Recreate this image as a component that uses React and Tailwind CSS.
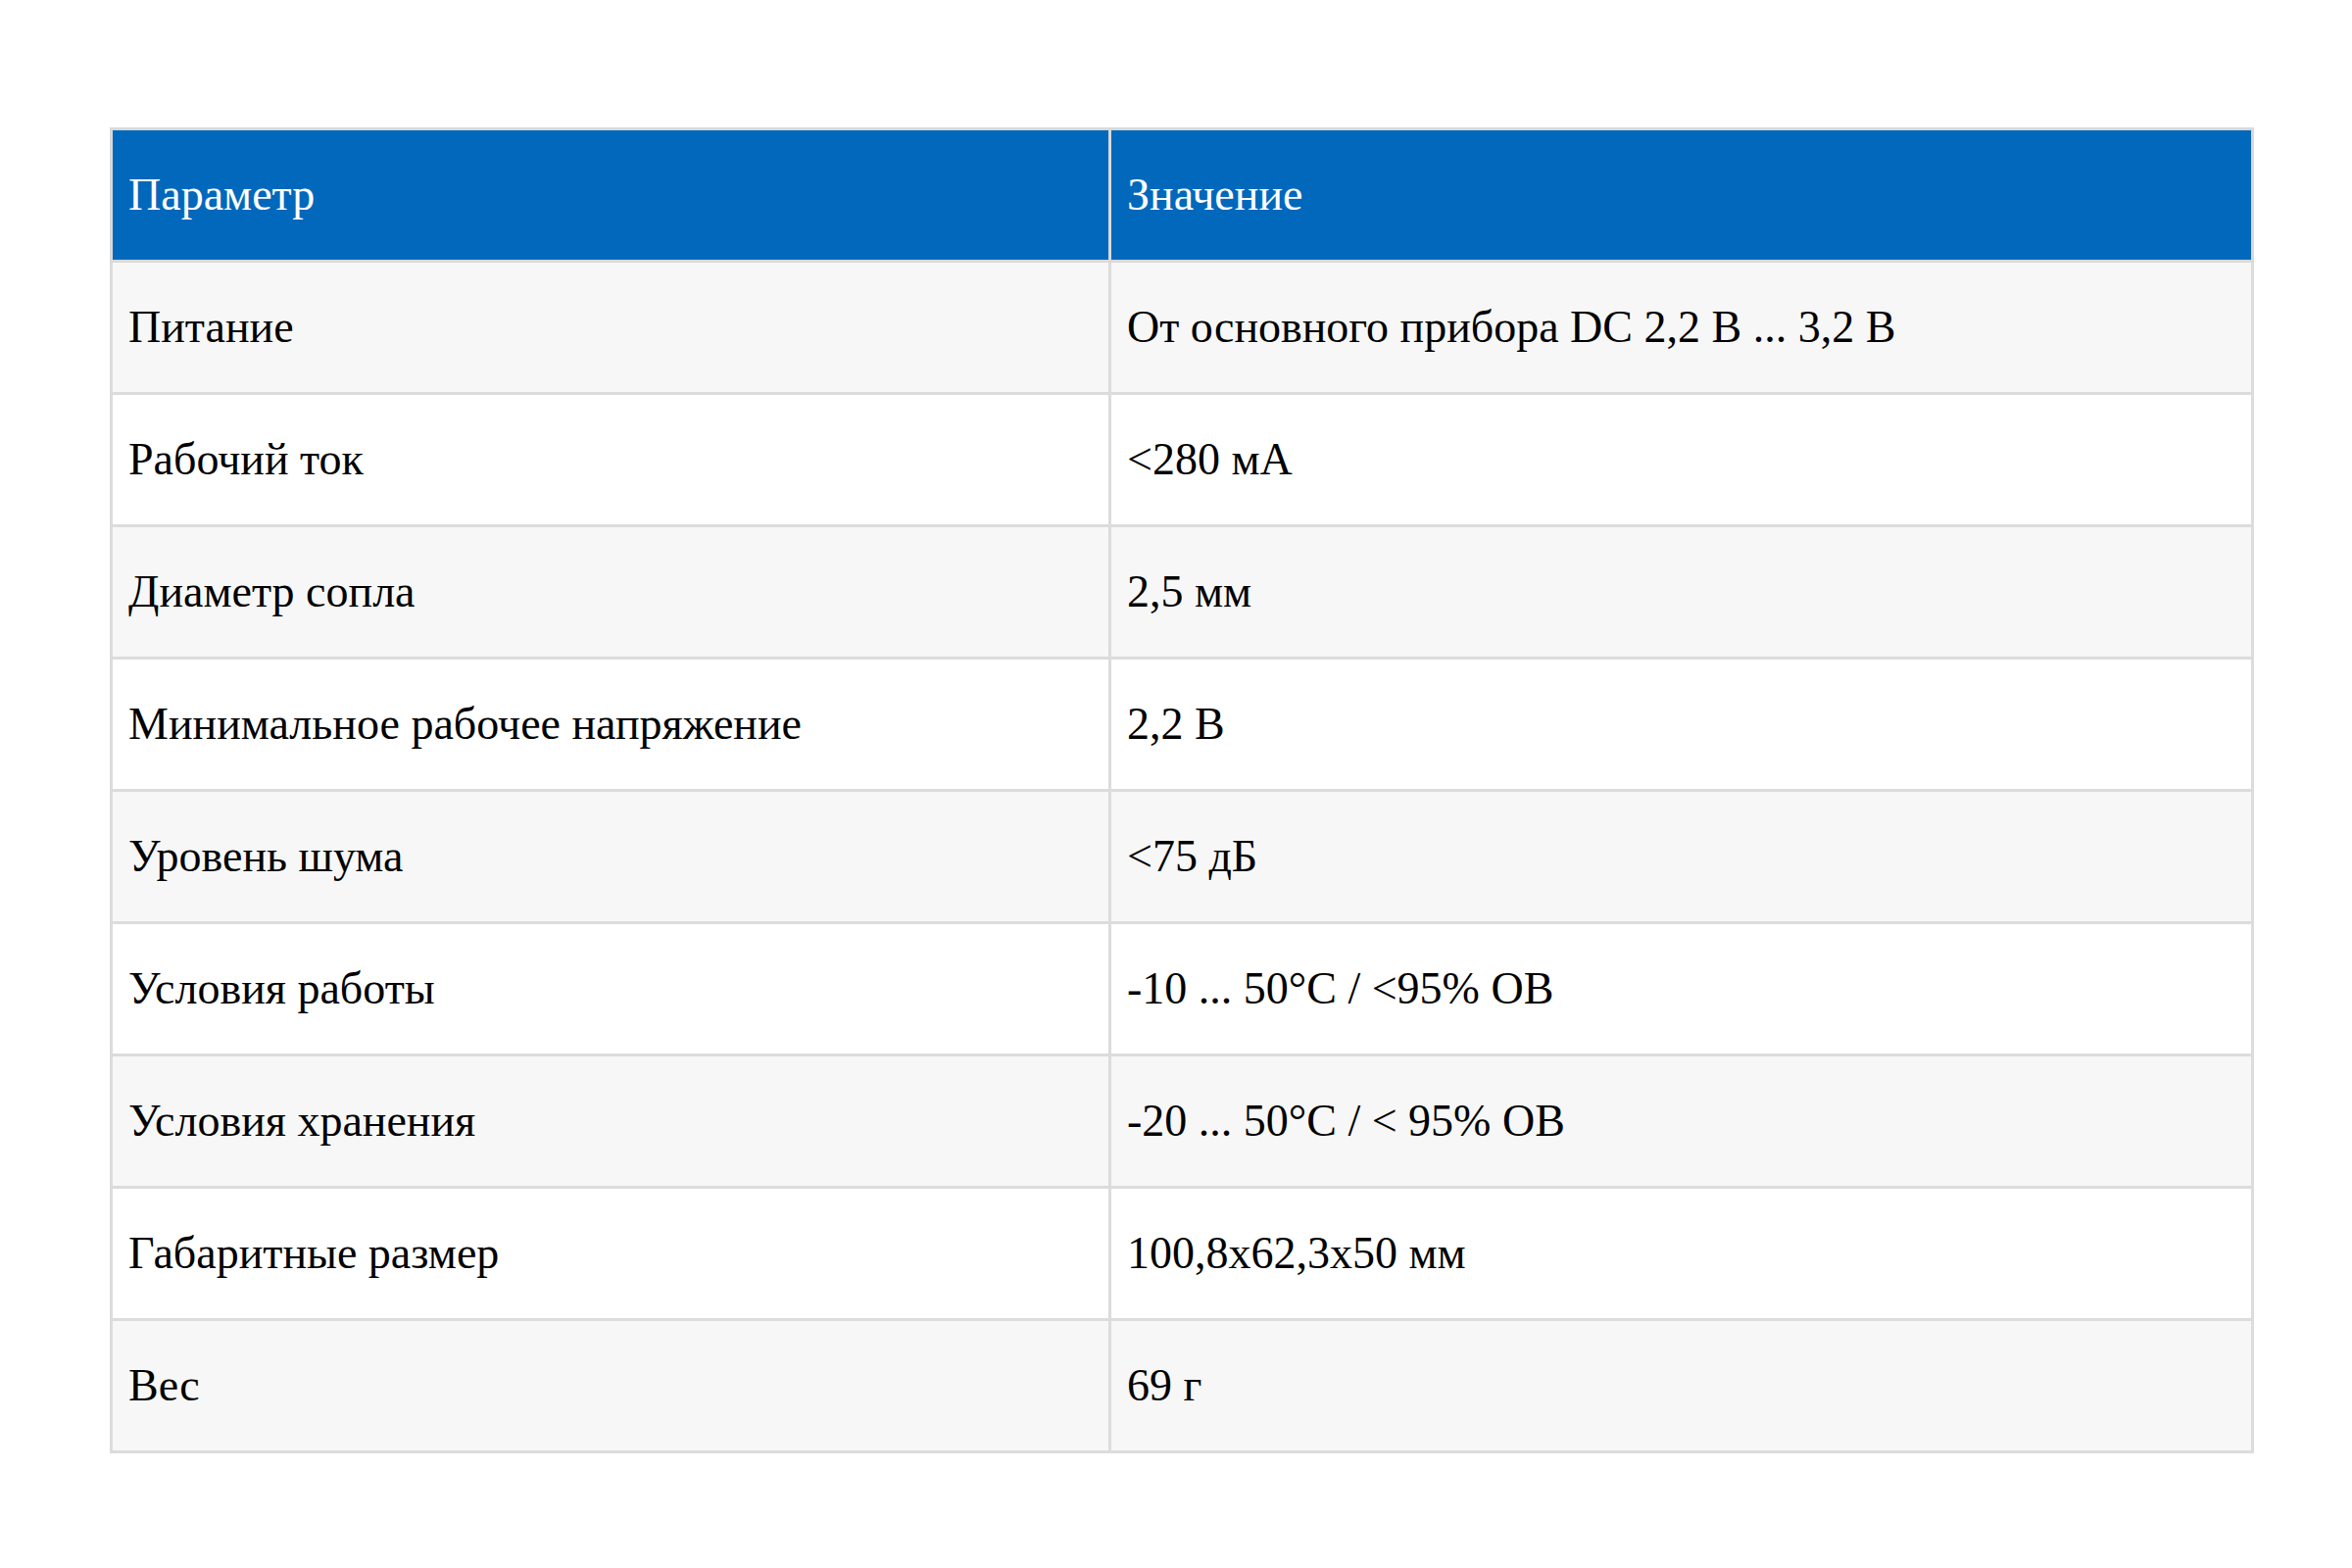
import React from 'react';

const rows = [
    ["Питание", "От основного прибора DC 2,2 В ... 3,2 В"],
    ["Рабочий ток", "<280 мА"],
    ["Диаметр сопла", "2,5 мм"],
    ["Минимальное рабочее напряжение", "2,2 В"],
    ["Уровень шума", "<75 дБ"],
    ["Условия работы", "-10 ... 50°C / <95% OB"],
    ["Условия хранения", "-20 ... 50°C / < 95% OB"],
    ["Габаритные размер", "100,8x62,3x50 мм"],
    ["Вес", "69 г"],
];

export default function App() {
    return (
        <div className="w-[2400px] h-[1600px] bg-white pt-[130px] pl-[112px]" style={{ fontFamily: '"Liberation Serif", serif' }}>
            <table className="border-collapse text-[46px] leading-none">
                <thead>
                    <tr className="bg-[#0268bc] text-white h-[135px]">
                        <th className="w-[1019px] border-[3px] border-[#d9d9d9] text-left font-normal pl-4">Параметр</th>
                        <th className="w-[1166px] border-[3px] border-[#d9d9d9] text-left font-normal pl-4">Значение</th>
                    </tr>
                </thead>
                <tbody>
                    {rows.map((r, i) => (
                        <tr key={i} className={`h-[135px] text-black ${i % 2 === 0 ? "bg-[#f7f7f7]" : "bg-white"}`}>
                            <td className="border-[3px] border-[#dcdcdc] pl-4">{r[0]}</td>
                            <td className="border-[3px] border-[#dcdcdc] pl-4">{r[1]}</td>
                        </tr>
                    ))}
                </tbody>
            </table>
        </div>
    );
}
